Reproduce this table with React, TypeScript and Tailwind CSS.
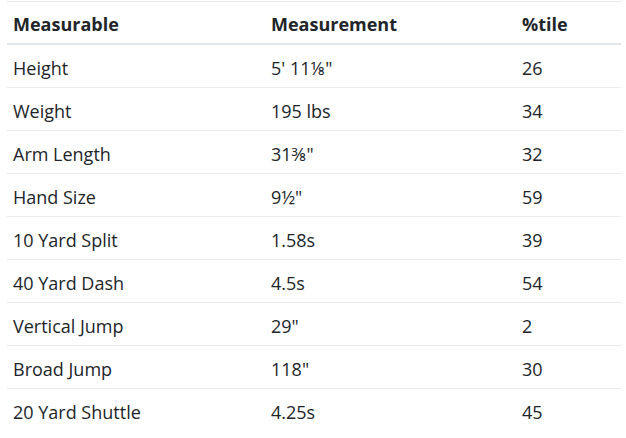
const rows = [
  { name: "Height", value: "5' 11⅛\"", pct: "26" },
  { name: "Weight", value: "195 lbs", pct: "34" },
  { name: "Arm Length", value: "31⅜\"", pct: "32" },
  { name: "Hand Size", value: "9½\"", pct: "59" },
  { name: "10 Yard Split", value: "1.58s", pct: "39" },
  { name: "40 Yard Dash", value: "4.5s", pct: "54" },
  { name: "Vertical Jump", value: "29\"", pct: "2" },
  { name: "Broad Jump", value: "118\"", pct: "30" },
  { name: "20 Yard Shuttle", value: "4.25s", pct: "45" },
];

export default function App() {
  return (
    <div className="w-[626px] h-[438px] bg-white pt-px pl-[7px] font-['Open_Sans',sans-serif] text-[#212529] text-[18px]">
      <div className="w-[614px]">
        {/* Header */}
        <div className="flex h-[44px] items-center pt-[3px] border-t border-b-2 border-t-[#e9ecef] border-b-[#e2e6ea] font-bold">
          <div className="w-[258px] pl-[6px]">Measurable</div>
          <div className="w-[251px] pl-[6px]">Measurement</div>
          <div className="flex-1 pl-[6px]">%tile</div>
        </div>
        {rows.map((r, i) => (
          <div
            key={r.name}
            className={`flex h-[43px] items-center pt-[4px] ${i < rows.length - 1 ? "border-b border-[#e9ecef]" : ""}`}
          >
            <div className="w-[258px] pl-[6px]">{r.name}</div>
            <div className="w-[251px] pl-[6px]">{r.value}</div>
            <div className="flex-1 pl-[6px]">{r.pct}</div>
          </div>
        ))}
      </div>
    </div>
  );
}
